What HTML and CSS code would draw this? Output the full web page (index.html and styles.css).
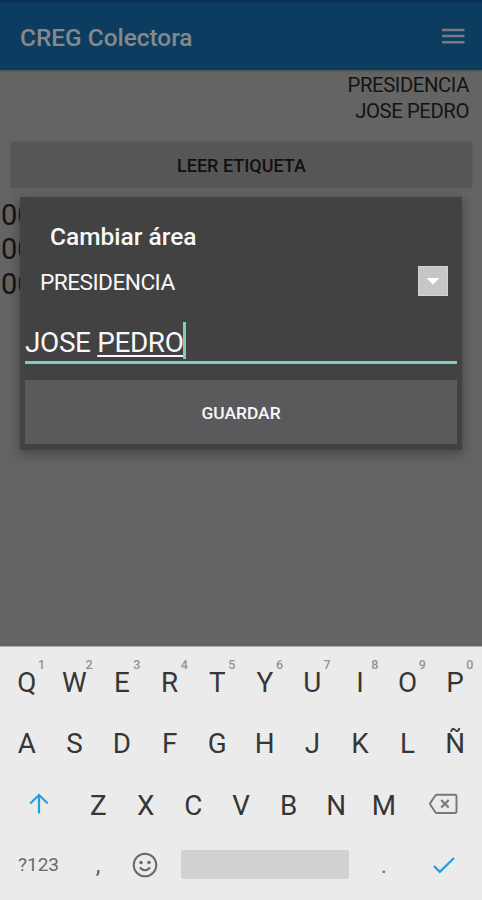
FILE: index.html
```html
<!DOCTYPE html>
<html lang="es">
<head>
<meta charset="utf-8">
<title>CREG Colectora</title>
<link rel="stylesheet" href="styles.css">
</head>
<body>
<div class="screen">
  <header class="appbar">
    <h1 class="appbar-title">CREG Colectora</h1>
    <svg class="menu" width="24" height="18" viewBox="0 0 24 18"><path d="M1 3h22.500M1 9h22.500M1 15.300h22.500" stroke="#777b80" stroke-width="2.600"/></svg>
  </header>
  <main class="content">
    <div class="user"><div>PRESIDENCIA</div><div>JOSE PEDRO</div></div>
    <div class="read-button">LEER ETIQUETA</div>
    <div class="tags"><div>00</div><div>00</div><div>00</div></div>
  </main>
  <section class="dialog">
    <h2 class="dialog-title">Cambiar área</h2>
    <div class="select">
      <span>PRESIDENCIA</span>
      <svg width="30" height="30" viewBox="0 0 30 30"><path d="M0 0h30v30H0z" fill="#c6c6c6"/><path d="M.5 .5h29v29H.5z" fill="none" stroke="#d2d2d2"/><path d="M8.500 12h13L15 18.500z" fill="#fff"/></svg>
    </div>
    <div class="input"><span>JOSE <span class="composing">PEDRO</span></span><i class="caret"></i></div>
    <div class="save">GUARDAR</div>
  </section>
  <section class="keyboard">
    <div class="row">
      <div class="key">Q<sup>1</sup></div><div class="key">W<sup>2</sup></div><div class="key">E<sup>3</sup></div><div class="key">R<sup>4</sup></div><div class="key">T<sup>5</sup></div><div class="key">Y<sup>6</sup></div><div class="key">U<sup>7</sup></div><div class="key">I<sup>8</sup></div><div class="key">O<sup>9</sup></div><div class="key">P<sup>0</sup></div>
    </div>
    <div class="row">
      <div class="key">A</div><div class="key">S</div><div class="key">D</div><div class="key">F</div><div class="key">G</div><div class="key">H</div><div class="key">J</div><div class="key">K</div><div class="key">L</div><div class="key">Ñ</div>
    </div>
    <div class="row">
      <div class="key wide"><svg width="20" height="22" viewBox="0 0 20 22"><path d="M10 20.500V2M1.200 10.500L10 2l8.800 8.500" fill="none" stroke="#27a0dc" stroke-width="2.200"/></svg></div>
      <div class="key">Z</div><div class="key">X</div><div class="key">C</div><div class="key">V</div><div class="key">B</div><div class="key">N</div><div class="key">M</div>
      <div class="key wide"><svg width="30" height="22" viewBox="0 0 30 22"><path d="M9 1.700H27Q28.500 1.700 28.500 3.200V18.500Q28.500 20 27 20H9Q8 20 7.400 19.200L2.200 11.500Q1.700 10.800 2.200 10.100L7.400 2.500Q8 1.700 9 1.700Z" fill="none" stroke="#777" stroke-width="1.900"/><path d="M13.200 7l7.500 7.500M20.700 7L13.200 14.500" stroke="#777" stroke-width="2.100"/></svg></div>
    </div>
    <div class="row bottom">
      <div class="key symbols">?123</div>
      <div class="key comma">,</div>
      <div class="key emoji"><svg width="26" height="26" viewBox="0 0 26 26"><circle cx="13" cy="13" r="11.300" fill="none" stroke="#686868" stroke-width="2"/><circle cx="9" cy="10.500" r="1.700" fill="#686868"/><circle cx="17" cy="10.500" r="1.700" fill="#686868"/><path d="M7.800 15.500Q13 21 18.200 15.500" fill="none" stroke="#686868" stroke-width="2"/></svg></div>
      <div class="space"></div>
      <div class="key period">.</div>
      <div class="key enter"><svg width="24" height="18" viewBox="0 0 24 18"><path d="M2 10l5.800 5.800L22 2" fill="none" stroke="#27a0dc" stroke-width="2.400"/></svg></div>
    </div>
  </section>
</div>
</body>
</html>
```
FILE: styles.css
```css
* { box-sizing: border-box; }
body { margin: 0; font-family: Roboto, sans-serif; }
.screen { position: relative; width: 482px; height: 900px; display: flex; flex-direction: column; background: #646464; overflow: hidden; }
.appbar { height: 70px; flex: none; display: flex; align-items: center; justify-content: space-between; padding: 4px 17px 0 20px; background: #0c3d60; border-top: 2px solid #102f57; box-shadow: 0 1px 2px #4a4a4a; }
.appbar-title { margin: 0 0 2px; font-size: 24.400px; font-weight: 500; color: #86898c; }
.menu { margin-bottom: 4px; }
.content { flex: 1; min-height: 0; color: #141414; }
.user { padding: 2px 13px 1px 0; text-align: right; font-size: 20.300px; letter-spacing: -.400px; line-height: 26px; }
.read-button { margin: 17px 10px 0 11px; height: 46px; line-height: 47px; text-align: center; font-size: 18px; font-weight: 500; background: #565656; box-shadow: 0 0 2px #5a5a5a; color: #101010; }
.tags { padding: 10px 0 0 1px; font-size: 29px; line-height: 34.300px; }
.dialog { position: absolute; left: 20px; top: 197px; width: 442px; height: 253px; padding: 0 5px; background: #424242; box-shadow: 0 3px 11px 1px rgba(0,0,0,.3); color: #f8f8f8; }
.dialog-title { margin: 25px 0 0 25px; font-size: 24.500px; line-height: 30px; font-weight: 500; }
.select { display: flex; justify-content: space-between; align-items: flex-start; height: 40px; margin-top: 9px; padding: 5px 9px 0 15px; font-size: 22.700px; letter-spacing: -.550px; line-height: 34px; }
.select svg { margin-top: 0; }
.input { display: flex; height: 45px; margin-top: 18px; border-bottom: 3px solid #80cbc4; font-size: 27.900px; letter-spacing: -.350px; line-height: 47px; }
.composing { text-decoration: underline; text-decoration-thickness: 1.500px; text-underline-offset: 2.500px; text-decoration-skip-ink: none; }
.caret { width: 3px; height: 37px; margin: 3px 0 0 -1px; background: #80cbc4; }
.save { height: 64px; margin-top: 16px; background: #5a5a5c; line-height: 66px; text-align: center; font-size: 17.400px; font-weight: 500; }
.keyboard { height: 254px; flex: none; padding: 4.500px 3px 0; background: #ebebeb; border-top: 1px solid #b0b0b0; color: #363636; }
.row { display: flex; height: 61.600px; }
.key { position: relative; flex: 1; display: flex; align-items: center; justify-content: center; font-size: 27.800px; }
.key sup { position: absolute; right: 5.500px; top: 5px; font-size: 12.500px; line-height: 16px; font-weight: 500; color: #939393; }
.key.wide { flex: 1.500; }
.key.wide svg { margin-bottom: 2px; }
.bottom { align-items: center; height: 57px; }
.key.symbols { flex: none; width: 71px; font-size: 19px; color: #6a6a6a; }
.key.comma { flex: none; width: 48px; font-size: 24px; color: #606060; }
.key.emoji { flex: none; width: 46px; }
.space { width: 168px; height: 29px; margin-left: 13px; border-radius: 3px; background: #d1d1d1; }
.key.period { flex: none; width: 70px; color: #777; font-size: 24px; }
.key.enter { flex: none; width: 49px; }
```
